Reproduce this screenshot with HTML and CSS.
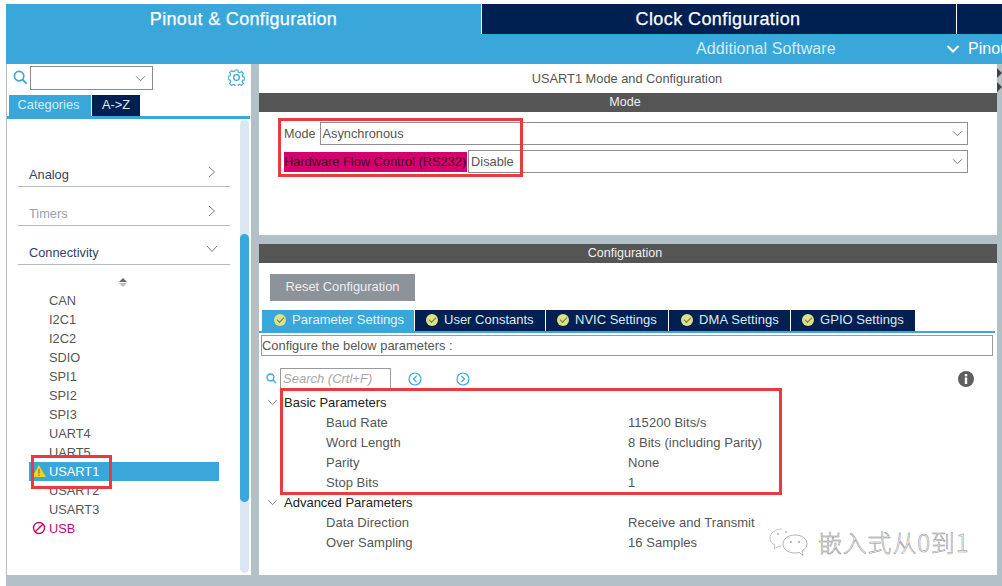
FILE: index.html
```html
<!DOCTYPE html>
<html lang="en">
<head>
<meta charset="utf-8">
<title>USART1 Mode and Configuration</title>
<link rel="stylesheet" href="styles.css">
</head>
<body>
<div class="app">
  <header class="header">
    <div class="main-tabs">
      <div class="main-tab main-tab-active">Pinout &amp; Configuration</div>
      <div class="main-tab main-tab-clock">Clock Configuration</div>
      <div class="main-tab main-tab-rest"></div>
    </div>
    <div class="sub-bar">
      <div class="sub-item">Additional Software</div>
      <div class="sub-pinout">
        <svg class="sub-chevron" viewBox="0 0 14 10"><path d="M1.5 2 7 7.5 12.5 2" fill="none" stroke="#fff" stroke-width="2"/></svg>
        <span>Pinout</span>
      </div>
    </div>
  </header>

  <div class="workspace">
    <aside class="sidebar">
      <div class="search-row">
        <svg class="search-icon" viewBox="0 0 16 16"><circle cx="6.5" cy="6.5" r="5" fill="none" stroke="#39a7da" stroke-width="1.8"/><path d="M10.2 10.2 14.5 14.5" stroke="#39a7da" stroke-width="2"/></svg>
        <div class="search-box">
          <svg class="select-chevron" viewBox="0 0 12 8"><path d="M1 1.5 6 6.500 11 1.5" fill="none" stroke="#666" stroke-width="1"/></svg>
        </div>
        <svg class="gear" viewBox="0 0 18 18"><path d="M7.5 1h3l.4 2.2 1.5.7 1.9-1.2 2 2.1-1.200 1.800.6 1.600 2.200.4v2.900l-2.200.4-.6 1.600 1.200 1.800-2 2.100-1.900-1.200-1.500.7-.4 2.200h-3l-.4-2.200-1.500-.7-1.900 1.200-2-2.100 1.200-1.800-.6-1.600L.1 10.500V7.600l2.200-.4.6-1.600L1.700 3.800l2-2.100 1.900 1.200 1.500-.7z" fill="none" stroke="#39a7da" stroke-width="1.200"/><circle cx="9" cy="9" r="3" fill="none" stroke="#39a7da" stroke-width="1.400"/></svg>
      </div>
      <div class="side-tabs">
        <div class="side-tab side-tab-active">Categories</div>
        <div class="side-tab side-tab-dark">A-&gt;Z</div>
      </div>
      <div class="side-content">
        <div class="tree">
          <div class="category cat-analog">
            <span>Analog</span>
            <svg class="cat-chevron" viewBox="0 0 8 12"><path d="M1 1 6.500 6 1 11" fill="none" stroke="#777" stroke-width="1"/></svg>
          </div>
          <div class="category cat-timers">
            <span>Timers</span>
            <svg class="cat-chevron" viewBox="0 0 8 12"><path d="M1 1 6.500 6 1 11" fill="none" stroke="#777" stroke-width="1"/></svg>
          </div>
          <div class="category cat-conn">
            <span>Connectivity</span>
            <svg class="cat-chevron-down" viewBox="0 0 12 8"><path d="M1 1 6 6.500 11 1" fill="none" stroke="#777" stroke-width="1"/></svg>
          </div>
          <div class="sort-arrows"><span class="arrow-up"></span><span class="arrow-down"></span></div>
          <ul class="periph">
            <li class="periph-item">CAN</li>
            <li class="periph-item">I2C1</li>
            <li class="periph-item">I2C2</li>
            <li class="periph-item">SDIO</li>
            <li class="periph-item">SPI1</li>
            <li class="periph-item">SPI2</li>
            <li class="periph-item">SPI3</li>
            <li class="periph-item">UART4</li>
            <li class="periph-item">UART5</li>
            <li class="periph-item periph-selected">
              <svg class="periph-icon" viewBox="0 0 14 13"><path d="M7 .5 13.800 12.500H.2z" fill="#f4d21f"/><path d="M7 4.500v4.500M7 10v1.500" stroke="#8a7a10" stroke-width="1.200"/></svg>
              USART1
            </li>
            <li class="periph-item">USART2</li>
            <li class="periph-item">USART3</li>
            <li class="periph-item periph-blocked">
              <svg class="periph-icon" viewBox="0 0 14 14"><circle cx="7" cy="7" r="5.500" fill="none" stroke="#c4086f" stroke-width="1.400"/><path d="M3.200 10.800 10.800 3.200" stroke="#c4086f" stroke-width="1.400"/></svg>
              USB
            </li>
          </ul>
        </div>
        <div class="side-scroll"><div class="side-thumb"></div></div>
      </div>
    </aside>

    <main class="panels">
      <section class="panel-mode">
        <div class="panel-title">USART1 Mode and Configuration</div>
        <div class="dark-bar">Mode</div>
        <div class="mode-form">
          <div class="form-row">
            <span class="form-label">Mode</span>
            <div class="select">Asynchronous
              <svg class="select-arrow" viewBox="0 0 12 8"><path d="M1 1.500 6 6.500 11 1.500" fill="none" stroke="#666" stroke-width="1"/></svg>
            </div>
          </div>
          <div class="form-row">
            <span class="form-label form-label-alert">Hardware Flow Control (RS232)</span>
            <div class="select">Disable
              <svg class="select-arrow" viewBox="0 0 12 8"><path d="M1 1.500 6 6.500 11 1.500" fill="none" stroke="#666" stroke-width="1"/></svg>
            </div>
          </div>
        </div>
      </section>

      <section class="panel-config">
        <div class="dark-bar">Configuration</div>
        <div class="reset-row"><div class="reset-btn">Reset Configuration</div></div>
        <div class="cfg-tabs">
          <div class="cfg-tab cfg-tab-active"><span class="check"></span>Parameter Settings</div>
          <div class="cfg-tab"><span class="check"></span>User Constants</div>
          <div class="cfg-tab"><span class="check"></span>NVIC Settings</div>
          <div class="cfg-tab"><span class="check"></span>DMA Settings</div>
          <div class="cfg-tab"><span class="check"></span>GPIO Settings</div>
        </div>
        <div class="cfg-note">Configure the below parameters :</div>
        <div class="cfg-search">
          <svg class="cfg-search-icon" viewBox="0 0 16 16"><circle cx="6.500" cy="6.500" r="5" fill="none" stroke="#39a7da" stroke-width="2"/><path d="M10.200 10.200 14.500 14.500" stroke="#39a7da" stroke-width="2"/></svg>
          <div class="cfg-search-box">Search (Crtl+F)</div>
          <svg class="nav-icon nav-prev" viewBox="0 0 14 14"><circle cx="7" cy="7" r="6" fill="none" stroke="#39a7da" stroke-width="1.200"/><path d="M8.500 4 5.500 7 8.500 10" fill="none" stroke="#39a7da" stroke-width="1.200"/></svg>
          <svg class="nav-icon nav-next" viewBox="0 0 14 14"><circle cx="7" cy="7" r="6" fill="none" stroke="#39a7da" stroke-width="1.200"/><path d="M5.500 4 8.500 7 5.500 10" fill="none" stroke="#39a7da" stroke-width="1.200"/></svg>
          <svg class="info-icon" viewBox="0 0 16 16"><circle cx="8" cy="8" r="8" fill="#5f5f5f"/><rect x="6.800" y="3" width="2.400" height="2.400" fill="#fff"/><rect x="6.800" y="6.500" width="2.400" height="6.500" fill="#fff"/></svg>
        </div>
        <div class="params">
          <div class="group-row">
            <svg class="group-chevron" viewBox="0 0 12 8"><path d="M1 1 6 6.500 11 1" fill="none" stroke="#777" stroke-width="1"/></svg>
            <span>Basic Parameters</span>
          </div>
          <div class="param-row"><span class="param-name">Baud Rate</span><span>115200 Bits/s</span></div>
          <div class="param-row"><span class="param-name">Word Length</span><span>8 Bits (including Parity)</span></div>
          <div class="param-row"><span class="param-name">Parity</span><span>None</span></div>
          <div class="param-row"><span class="param-name">Stop Bits</span><span>1</span></div>
          <div class="group-row">
            <svg class="group-chevron" viewBox="0 0 12 8"><path d="M1 1 6 6.500 11 1" fill="none" stroke="#777" stroke-width="1"/></svg>
            <span>Advanced Parameters</span>
          </div>
          <div class="param-row"><span class="param-name">Data Direction</span><span>Receive and Transmit</span></div>
          <div class="param-row"><span class="param-name">Over Sampling</span><span>16 Samples</span></div>
        </div>
      </section>
    </main>

    <div class="edge-bar"><span class="edge-mark"></span><span class="edge-mark"></span></div>
  </div>

  <div class="red-box red-mode"></div>
  <div class="red-box red-usart"></div>
  <div class="red-box red-params"></div>

  <div class="watermark">
    <svg class="wm-icon" viewBox="0 0 42 30"><path d="M14 2C7 2 2 6 2 11c0 3 2 6 5 7l-1 4 5-3h2" fill="none" stroke="#b5b5b5" stroke-width=".8"/><path d="M27 8c-7 0-12 4-12 9s5 9 12 9c1.500 0 3-.2 4-.6l4 3-1-4.500c3-1.700 5-4 5-7 0-5-5-8.900-12-8.900z" fill="#fff" stroke="#a0a0a0" stroke-width=".8"/><circle cx="23" cy="15" r=".9" fill="#999"/><circle cx="31" cy="15" r=".9" fill="#999"/><circle cx="10" cy="7" r=".9" fill="#aaa"/><circle cx="18" cy="5" r=".9" fill="#aaa"/></svg>
    <span class="wm-text">嵌入式从0到1</span>
  </div>
</div>
</body>
</html>
```
FILE: styles.css
```css
* { box-sizing: border-box; }
html, body { margin: 0; padding: 0; background: #fff; }
body { font-family: "Liberation Sans", Arial, sans-serif; font-size: 13px; color: #555; overflow: hidden; }

.app { position: relative; width: 1002px; height: 586px; overflow: hidden; padding-top: 4px; display: flex; flex-direction: column; }

/* header */
.header { margin-left: 6px; height: 60px; background: #39a7da; flex: none; }
.main-tabs { display: flex; height: 30px; }
.main-tab { font-size: 18px; line-height: 30px; color: #fff; text-align: center; -webkit-text-stroke: 0.25px #fff; letter-spacing: 0.33px; }
.main-tab-active { width: 475px; height: 30px; line-height: 31px; }
.main-tab-clock { width: 475px; background: #002052; border-left: 1px solid #fff; line-height: 31px; letter-spacing: 0.42px; padding-right: 2px; }
.main-tab-rest { flex: 1; background: #002052; border-left: 1px solid #fff; }
.sub-bar { height: 30px; display: flex; align-items: center; font-size: 16px; overflow: hidden; }
.sub-item { width: 920px; flex: none; padding-left: 690px; white-space: nowrap; letter-spacing: 0.1px; color: #d5ecf7; }
.sub-pinout { display: flex; align-items: center; gap: 8px; margin-left: 20px; color: #fff; white-space: nowrap; flex: none; }
.sub-chevron { width: 14px; height: 10px; flex: none; }

/* workspace */
.workspace { flex: 1; display: flex; background: #b4c0c8; margin-left: 6px; padding-bottom: 11px; min-height: 0; }

/* sidebar */
.sidebar { width: 244px; margin-left: 1px; margin-right: 8px; background: #fff; flex: none; display: flex; flex-direction: column; }
.search-row { height: 31px; display: flex; align-items: flex-start; padding: 2px 0 0 6px; flex: none; }
.search-icon { width: 15px; height: 15px; margin-top: 4px; flex: none; }
.search-box { width: 123px; height: 24px; margin-left: 2px; border: 1px solid #8b8b8b; position: relative; }
.select-chevron { position: absolute; right: 6px; top: 8px; width: 11px; height: 7px; }
.gear { width: 17px; height: 17px; margin-left: 75px; margin-top: 3px; flex: none; }

.side-tabs { display: flex; height: 24px; padding-left: 2px; flex: none; border-bottom: 3px solid #39a7da; margin-right: 1px; gap: 1px; }
.side-tab { height: 21px; line-height: 20px; text-align: center; color: #d8eef8; font-size: 12.8px; }
.side-tab-active { width: 82px; background: #39a7da; padding-right: 3px; }
.side-tab-dark { width: 48px; background: #002052; }

.side-content { flex: 1; display: flex; min-height: 0; padding-left: 1px; }
.tree { flex: 1; position: relative; padding-top: 41px; }
.category { margin-left: 10px; width: 212px; border-bottom: 1px solid #b5bbc0; padding: 1px 14px 0 11px; display: flex; align-items: center; justify-content: space-between; color: #36415e; font-size: 12.8px; }
.cat-analog { height: 27px; margin-bottom: 13px; padding-top: 3px; }
.cat-timers { height: 26px; color: #99a0a8; margin-bottom: 13px; }
.cat-conn { height: 26px; }
.cat-chevron { width: 8px; height: 12px; margin-top: -5px; }
.cat-chevron-down { width: 12px; height: 8px; margin-top: -6px; margin-right: -2px; }
.sort-arrows { position: absolute; left: 111px; top: 159px; display: flex; flex-direction: column; gap: 1px; }
.arrow-up { width: 0; height: 0; border-left: 4px solid transparent; border-right: 4px solid transparent; border-bottom: 4px solid #666; }
.arrow-down { width: 0; height: 0; border-left: 4px solid transparent; border-right: 4px solid transparent; border-top: 4px solid #bbb; }
.periph { list-style: none; margin: 26px 0 0 0; padding: 0 0 0 21px; }
.periph-item { height: 19px; line-height: 19px; padding-left: 20px; width: 190px; font-size: 12.8px; color: #555; position: relative; white-space: nowrap; }
.periph-selected { background: #39a7da; color: #fff; }
.periph-blocked { color: #c4086f; }
.periph-icon { position: absolute; left: 3px; top: 2px; width: 14px; height: 14px; }
.side-scroll { width: 9px; background: #dbe8f3; margin: 1px 2px 2px 0; border-radius: 5px; padding-top: 114px; padding-bottom: 71px; flex: none; display: flex; }
.side-thumb { width: 100%; background: #39a7da; border-radius: 5px; }

/* right panels */
.panels { flex: 1; display: flex; flex-direction: column; gap: 9px; min-width: 0; }
.panel-mode { height: 171px; background: #fff; flex: none; }
.panel-title { height: 29px; line-height: 29px; text-align: center; padding-right: 2px; color: #555; font-size: 12.8px; }
.dark-bar { height: 19px; line-height: 18px; background: #555; color: #f0f0f0; text-align: center; flex: none; padding-right: 6px; font-size: 12.5px; }
.mode-form { padding: 10px 29px 0 25px; display: flex; flex-direction: column; gap: 5px; }
.form-row { display: flex; height: 23px; align-items: center; gap: 1px; }
.form-label { white-space: nowrap; font-size: 12.6px; padding-right: 3px; }
.form-label-alert { background: #d4006f; color: #3c0a25; height: 20px; line-height: 20px; padding-right: 1px; font-size: 12.8px; }
.select { flex: 1; height: 23px; line-height: 21px; border: 1px solid #8f8f8f; padding-left: 2px; position: relative; font-size: 12.8px; }
.select-arrow { position: absolute; right: 4px; top: 7px; width: 11px; height: 7px; }

.panel-config { flex: 1; background: #fff; display: flex; flex-direction: column; min-height: 0; }
.reset-row { height: 47px; padding: 11px 0 0 11px; flex: none; }
.reset-btn { width: 145px; height: 27px; line-height: 26px; background: #8c9399; color: #eee; text-align: center; font-size: 12.9px; }
.cfg-tabs { display: flex; height: 23px; padding-left: 3px; border-bottom: 2px solid #39a7da; gap: 1px; margin-right: 2px; flex: none; }
.cfg-tab { height: 21px; padding-bottom: 2px; background: #002052; color: #dfe8f2; display: flex; align-items: center; padding-left: 11px; white-space: nowrap; }
.cfg-tab:nth-child(1) { width: 152px; letter-spacing: 0.05px; }
.cfg-tab:nth-child(2) { width: 130px; }
.cfg-tab:nth-child(3) { width: 122px; }
.cfg-tab:nth-child(4) { width: 121px; padding-left: 12px; letter-spacing: 0.1px; }
.cfg-tab:nth-child(5) { width: 124px; letter-spacing: 0.05px; }
.cfg-tab-active { background: #39a7da; color: #e4f3fb; padding-left: 12px; }
.check { width: 12px; height: 12px; margin-right: 6px; border-radius: 50%; background: #dfe08a; position: relative; flex: none; }
.check::after { content: ""; position: absolute; left: 3px; top: 3px; width: 6px; height: 3px; border-left: 1.5px solid #6d7a2e; border-bottom: 1.5px solid #6d7a2e; transform: rotate(-45deg); }
.cfg-note { height: 21px; line-height: 19px; margin: 2px 4px 0 2px; border: 1px solid #9a9a9a; color: #555; white-space: nowrap; flex: none; font-size: 12.9px; }
.cfg-search { height: 21px; margin-top: 12px; display: flex; align-items: center; padding-left: 7px; position: relative; flex: none; }
.cfg-search-icon { width: 11px; height: 11px; flex: none; }
.cfg-search-box { width: 111px; height: 22px; line-height: 20px; margin-left: 3px; border: 1px solid #9a9a9a; border-bottom: none; padding-left: 2px; color: #a8a8a8; font-style: italic; flex: none; }
.nav-icon { width: 14px; height: 14px; flex: none; }
.nav-prev { margin-left: 17px; }
.nav-next { margin-left: 34px; }
.info-icon { position: absolute; left: 699px; top: 3px; width: 16px; height: 16px; }
.params { padding-left: 8px; margin-top: 3px; }
.group-row { height: 20px; display: flex; align-items: center; color: #222; }
.group-chevron { width: 11px; height: 7px; flex: none; margin-right: 6px; }
.param-row { height: 20px; display: flex; align-items: center; padding-left: 59px; color: #555; letter-spacing: 0.05px; }
.param-name { width: 302px; flex: none; }

.edge-bar { width: 5px; background: #b4c0c8; flex: none; display: flex; flex-direction: column; gap: 4px; padding-top: 4px; }
.edge-mark { width: 0; height: 0; border-top: 5px solid transparent; border-bottom: 5px solid transparent; border-left: 5px solid #444; }

/* overlays */
.red-box { position: absolute; border: 3px solid #ea3a3e; pointer-events: none; }
.red-mode { left: 278px; top: 118px; width: 245px; height: 59px; }
.red-usart { left: 31px; top: 455px; width: 81px; height: 34px; }
.red-params { left: 280px; top: 388px; width: 502px; height: 107px; }

.watermark { position: absolute; left: 768px; top: 527px; display: flex; align-items: center; gap: 8px; }
.wm-icon { width: 42px; height: 30px; }
.wm-text { font-family: "Noto Sans CJK SC", "DejaVu Sans", sans-serif; font-size: 24px; font-weight: 300; line-height: 30px; color: #fff; -webkit-text-stroke: 0.5px #8a8a8a; letter-spacing: 0.8px; }
```
